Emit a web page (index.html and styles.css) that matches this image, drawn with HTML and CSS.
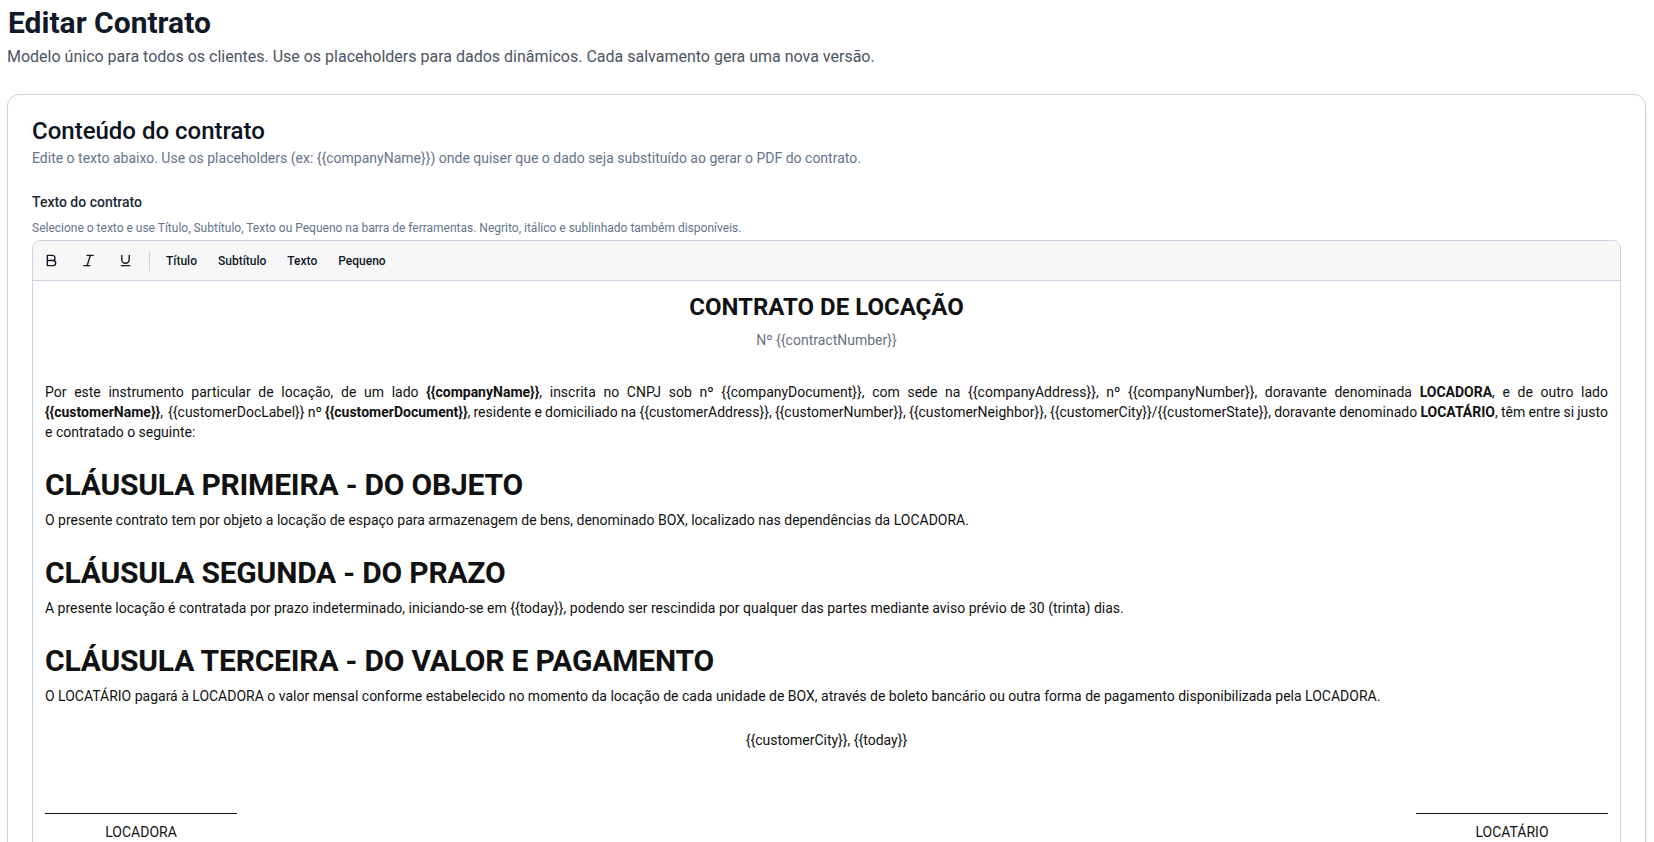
FILE: index.html
```html
<!DOCTYPE html>
<html lang="pt-BR">
<head>
    <meta charset="UTF-8">
    <meta name="viewport" content="width=device-width, initial-scale=1.0">
    <title>Editar Contrato</title>
    <link rel="stylesheet" href="styles.css">
</head>
<body>
    <main class="page">
        <header class="page-header">
            <h1>Editar Contrato</h1>
            <p>Modelo único para todos os clientes. Use os placeholders para dados dinâmicos. Cada salvamento gera uma nova versão.</p>
        </header>

        <!-- Contract card -->
        <section class="card">
            <h2 class="card-title">Conteúdo do contrato</h2>
            <p class="card-desc">Edite o texto abaixo. Use os placeholders (ex: {{companyName}}) onde quiser que o dado seja substituído ao gerar o PDF do contrato.</p>

            <label class="field-label" for="contractEditor">Texto do contrato</label>
            <p class="field-hint">Selecione o texto e use Título, Subtítulo, Texto ou Pequeno na barra de ferramentas. Negrito, itálico e sublinhado também disponíveis.</p>

            <div class="editor">
                <div class="toolbar">
                    <button class="tool-icon" title="Negrito">
                        <svg viewBox="0 0 14 14"><path d="M2.5 1.5h5.5a2.75 2.75 0 0 1 0 5.5H2.5z M2.5 7h6.25a2.75 2.75 0 0 1 0 5.5H2.5z"/></svg>
                    </button>
                    <button class="tool-icon" title="Itálico">
                        <svg viewBox="0 0 14 14"><line x1="5.5" y1="1.5" x2="12" y2="1.5"/><line x1="2" y1="12.5" x2="8.5" y2="12.5"/><line x1="9" y1="1.5" x2="5.5" y2="12.5"/></svg>
                    </button>
                    <button class="tool-icon" title="Sublinhado">
                        <svg viewBox="0 0 14 14"><path d="M3 1.5v4.5a4 4 0 0 0 8 0V1.5"/><line x1="2.5" y1="12.5" x2="11.5" y2="12.5"/></svg>
                    </button>
                    <span class="tool-sep"></span>
                    <button class="tool-text">Título</button>
                    <button class="tool-text">Subtítulo</button>
                    <button class="tool-text">Texto</button>
                    <button class="tool-text">Pequeno</button>
                </div>

                <div class="doc" id="contractEditor" contenteditable="true">
                    <h3 class="doc-title">CONTRATO DE LOCAÇÃO</h3>
                    <p class="doc-number">Nº {{contractNumber}}</p>

                    <p class="doc-intro">Por este instrumento particular de locação, de um lado <b>{{companyName}}</b>, inscrita no CNPJ sob nº {{companyDocument}}, com sede na {{companyAddress}}, nº {{companyNumber}}, doravante denominada <b>LOCADORA</b>, e de outro lado <b>{{customerName}}</b>, <span class="tight">{{customerDocLabel}} nº <b>{{customerDocument}}</b>, residente e domiciliado na {{customerAddress}}, {{customerNumber}}, {{customerNeighbor}}, {{customerCity}}/{{customerState}}, doravante denominado <b>LOCATÁRIO</b>, têm entre si justo</span> e&nbsp;contratado o seguinte:</p>

                    <h4 class="clause">CLÁUSULA PRIMEIRA - DO OBJETO</h4>
                    <p>O presente contrato tem por objeto a locação de espaço para armazenagem de bens, denominado BOX, localizado nas dependências da LOCADORA.</p>

                    <h4 class="clause">CLÁUSULA SEGUNDA - DO PRAZO</h4>
                    <p>A presente locação é contratada por prazo indeterminado, iniciando-se em {{today}}, podendo ser rescindida por qualquer das partes mediante aviso prévio de 30 (trinta) dias.</p>

                    <h4 class="clause">CLÁUSULA TERCEIRA - DO VALOR E PAGAMENTO</h4>
                    <p>O LOCATÁRIO pagará à LOCADORA o valor mensal conforme estabelecido no momento da locação de cada unidade de BOX, através de boleto bancário ou outra forma de pagamento disponibilizada pela LOCADORA.</p>

                    <p class="doc-place">{{customerCity}}, {{today}}</p>

                    <div class="signatures">
                        <div class="signature">LOCADORA</div>
                        <div class="signature">LOCATÁRIO</div>
                    </div>
                </div>
            </div>
        </section>
    </main>
</body>
</html>
```

FILE: styles.css
```css
/* General */
body {
    margin: 0;
    font-family: Roboto, 'Segoe UI', Arial, sans-serif;
    color: #0f172a;
    background: #fff;
}

.page {
    padding: 5px 8px 40px 7px;
}

.page-header h1 {
    margin: 0;
    font-size: 30px;
    line-height: 36px;
    font-weight: 700;
    color: #111827;
    padding-left: 1px;
}

.page-header p {
    margin: 4px 0 0;
    font-size: 16px;
    line-height: 24px;
    color: #4b5563;
}

/* Card */
.card {
    margin-top: 25px;
    border: 1px solid #cbd5e1;
    border-radius: 12px;
    padding: 22px 24px 24px;
    box-shadow: 0 1px 3px rgba(15, 23, 42, 0.08);
}

.card-title {
    margin: 0;
    font-size: 24px;
    line-height: 28px;
    font-weight: 500;
    color: #0b1220;
}

.card-desc {
    margin: 3px 0 0;
    font-size: 14px;
    line-height: 20px;
    color: #64748b;
}

.field-label {
    display: block;
    margin-top: 24px;
    font-size: 14px;
    line-height: 20px;
    font-weight: 500;
    color: #1e293b;
}

.field-hint {
    margin: 8px 0 4px;
    font-size: 12px;
    line-height: 16px;
    color: #64748b;
}

/* Editor */
.editor {
    border: 1px solid #cbd5e1;
    border-radius: 8px;
    overflow: hidden;
}

.toolbar {
    display: flex;
    align-items: center;
    gap: 5px;
    height: 39px;
    padding: 0 2px;
    background: #f7f7f8;
    border-bottom: 1px solid #cbd5e1;
}

.toolbar button {
    border: none;
    background: none;
    font-family: inherit;
    color: #0f172a;
    cursor: pointer;
    border-radius: 4px;
}

.toolbar button:hover {
    background: #e5e7eb;
}

.tool-icon {
    width: 32px;
    height: 28px;
    display: flex;
    align-items: center;
    justify-content: center;
    padding: 0;
}

.tool-icon svg {
    width: 13px;
    height: 13px;
    fill: none;
    stroke: #111827;
    stroke-width: 1.5;
    stroke-linecap: round;
    stroke-linejoin: round;
}

.tool-sep {
    width: 1px;
    height: 20px;
    margin: 0 3px;
    background: #cbd5e1;
}

.tool-text {
    padding: 6px 8px;
    font-size: 12px;
    font-weight: 500;
}

/* Document */
.doc {
    padding: 12px 12px 24px;
    font-size: 14px;
    line-height: 20px;
    color: #111;
    outline: none;
}

.doc p {
    margin: 0;
}

.doc-title {
    margin: 0;
    text-align: center;
    font-size: 24px;
    line-height: 28px;
    font-weight: 700;
}

.doc-number {
    margin-top: 9px !important;
    text-align: center;
    color: #6b7280;
}

.doc-intro {
    margin-top: 32px !important;
    text-align: justify;
}

.doc-intro .tight {
    word-spacing: -2px;
}

.clause {
    margin: 25px 0 7px;
    font-size: 30px;
    line-height: 36px;
    font-weight: 700;
    letter-spacing: -0.2px;
}

.doc-place {
    margin-top: 24px !important;
    text-align: center;
}

.signatures {
    display: flex;
    justify-content: space-between;
    margin-top: 63px;
}

.signature {
    width: 192px;
    border-top: 1px solid #111;
    padding-top: 8px;
    text-align: center;
}
```
